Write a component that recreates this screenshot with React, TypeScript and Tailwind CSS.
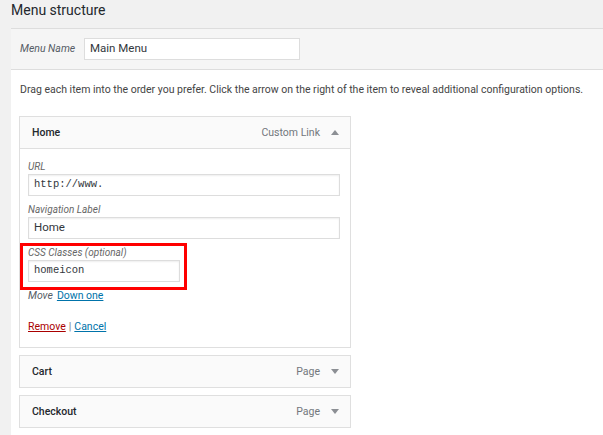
const sans = "font-['Roboto','Noto_Sans',sans-serif]";

function Caret({ up }: { up?: boolean }) {
  return (
    <svg width="8" height="5" viewBox="0 0 8 5" className="shrink-0">
      {up ? <path d="M0 5 L4 0 L8 5 Z" fill="#8c8f94" /> : <path d="M0 0 L8 0 L4 5 Z" fill="#8c8f94" />}
    </svg>
  );
}

function ItemHeader({ title, kind, up }: { title: string; kind: string; up?: boolean }) {
  return (
    <div className="h-[31px] flex items-center justify-between bg-[#fafafa] pl-[12px] pr-[11px]">
      <span className="text-[10.5px] font-medium text-[#23282d]">{title}</span>
      <div className="flex items-center gap-[11px]">
        <span className="text-[10.5px] text-[#72777c]">{kind}</span>
        <Caret up={up} />
      </div>
    </div>
  );
}

function Field({ label, value, mono, width }: { label: string; value: string; mono?: boolean; width: string }) {
  return (
    <div className="flex flex-col">
      <span className="h-[14px] leading-[14px] text-[10px] italic text-[#666]">{label}</span>
      <div
        className={`h-[22px] ${width} border border-[#dddddd] bg-white shadow-[inset_0_1px_2px_rgba(0,0,0,0.07)] flex items-center px-[5px] text-[#32373c] ${
          mono ? "font-['Liberation_Mono',monospace] text-[10.5px]" : "text-[11.5px]"
        }`}
      >
        {value}
      </div>
    </div>
  );
}

export default function App() {
  return (
    <div className={`w-[603px] h-[435px] overflow-hidden bg-[#f1f1f1] ${sans}`}>
      <div className="h-[28px] pl-[11px] pt-[1px] text-[14px] leading-[18px] text-[#23282d]">Menu structure</div>
      <div className="ml-[11px] bg-white border-t border-[#dddddd] h-[407px]">
        <div className="h-[41px] bg-[#f5f5f5] border-b border-[#dddddd] flex items-center pl-[9px] gap-[10px]">
          <span className="text-[10.5px] italic text-[#555d66] whitespace-nowrap w-[54px]">Menu Name</span>
          <div className="w-[216px] h-[22px] border border-[#dddddd] bg-white flex items-center px-[5px] text-[11.5px] text-[#32373c]">
            Main Menu
          </div>
        </div>
        <p className="pl-[9px] pt-[12px] text-[10.5px] leading-[15px] text-[#444] whitespace-nowrap">
          Drag each item into the order you prefer. Click the arrow on the right of the item to reveal additional configuration options.
        </p>
        <div className="ml-[8px] mt-[19px] w-[332px] flex flex-col gap-[7px]">
          <div className="border border-[#dfdfdf]">
            <div className="border-b border-[#dfdfdf]">
              <ItemHeader title="Home" kind="Custom Link" up />
            </div>
            <div className="pl-[8px] pt-[11px] pb-[13px] flex flex-col">
              <Field label="URL" value="http://www." mono width="w-[312px]" />
              <div className="mt-[7px]">
                <Field label="Navigation Label" value="Home" width="w-[312px]" />
              </div>
              <div className="mt-[7px] relative">
                <Field label="CSS Classes (optional)" value="homeicon" mono width="w-[152px]" />
                <div className="absolute -left-[8px] -top-[3px] w-[167px] h-[47px] border-[3px] border-[#ff0000]" />
              </div>
              <div className="mt-[7px] h-[14px] leading-[14px] text-[10.5px] flex gap-[4px]">
                <span className="italic text-[#555d66]">Move</span>
                <span className="text-[#0073aa] underline">Down one</span>
              </div>
              <div className="mt-[17px] h-[14px] leading-[14px] text-[10.5px] flex gap-[3px]">
                <span className="text-[#a00] underline">Remove</span>
                <span className="text-[#72777c]">|</span>
                <span className="text-[#0073aa] underline">Cancel</span>
              </div>
            </div>
          </div>
          <div className="border border-[#dfdfdf]">
            <ItemHeader title="Cart" kind="Page" />
          </div>
          <div className="border border-[#dfdfdf]">
            <ItemHeader title="Checkout" kind="Page" />
          </div>
        </div>
      </div>
    </div>
  );
}
